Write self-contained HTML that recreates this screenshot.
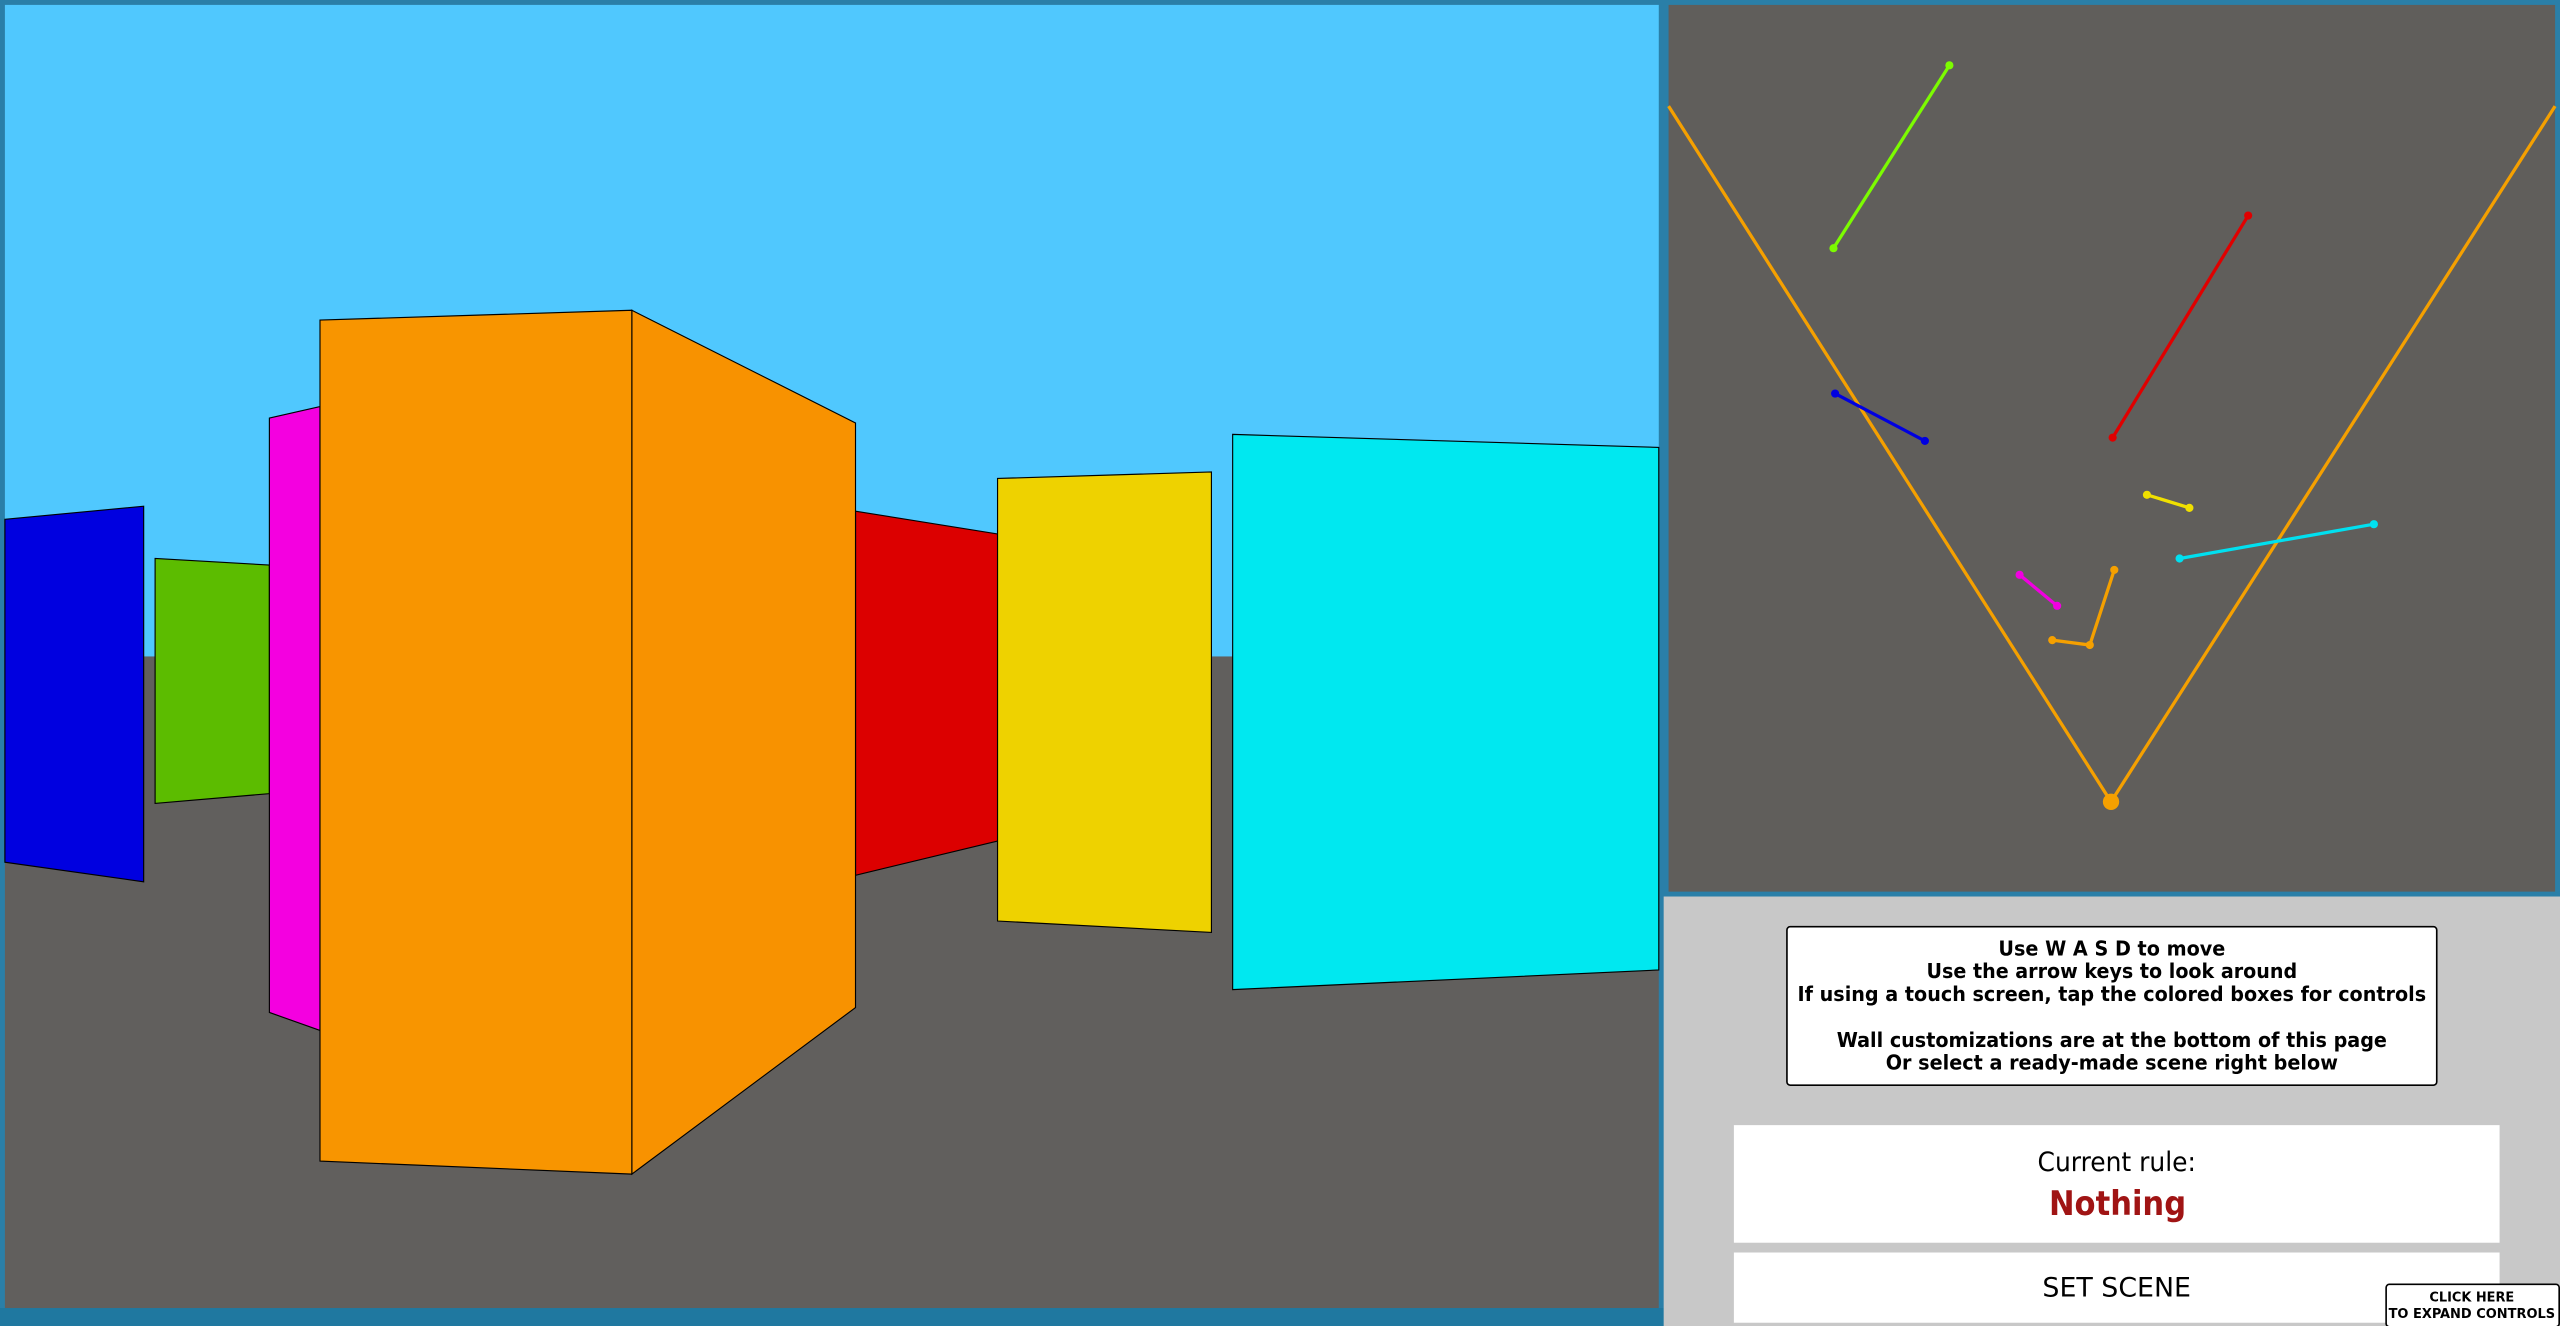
<!DOCTYPE html>
<html><head><meta charset="utf-8"><style>
html,body{margin:0;padding:0;width:2560px;height:1326px;overflow:hidden;background:#2a7fa8}
svg{display:block}
text{font-family:"DejaVu Sans Condensed","DejaVu Sans","Liberation Sans",sans-serif;text-anchor:middle}
</style></head><body>
<svg width="2560" height="1326" viewBox="0 0 1568 812" preserveAspectRatio="none">
<rect x="0" y="0" width="1568" height="812" fill="#2a7fa8"/>
<rect x="0" y="801" width="1019" height="11" fill="#1f78a0"/>
<rect x="3" y="3" width="1013" height="399" fill="#50c8fe"/>
<rect x="3" y="402" width="1013" height="399" fill="#615f5d"/>
<g stroke="#000" stroke-width="0.7">
<polygon points="3,318 88,310 88,540 3,528" fill="#0000e0"/>
<polygon points="95,342 165,346 165,486 95,492" fill="#5cbc00"/>
<polygon points="165,256 196,249 196,631 165,620" fill="#f400e0"/>
<polygon points="524,313 611,327 611,515 524,536" fill="#dc0000"/>
<polygon points="387,190 524,259 524,617 387,719" fill="#f89200"/>
<polygon points="196,196 387,190 387,719 196,711" fill="#f89500"/>
<polygon points="611,293 742,289 742,571 611,564" fill="#eed200"/>
<polygon points="755,266 1016,274 1016,594 755,606" fill="#00e8f0"/>
</g>
<rect x="1022" y="3" width="543" height="543" fill="#605e5b"/>
<rect x="1019" y="549" width="549" height="263" fill="#c8c8c8"/>
<g stroke-width="2" fill="none">
<polyline points="1022,65 1293,491 1565,65" stroke="#f5a000"/>
<line x1="1123" y1="152" x2="1194" y2="40" stroke="#7cfc00"/>
<line x1="1294" y1="268" x2="1377" y2="132" stroke="#e00000"/>
<line x1="1124" y1="241" x2="1179" y2="270" stroke="#0000e0"/>
<line x1="1315" y1="303" x2="1341" y2="311" stroke="#f0e000"/>
<line x1="1335" y1="342" x2="1454" y2="321" stroke="#00e0f0"/>
<line x1="1237" y1="352" x2="1260" y2="371" stroke="#f000e0"/>
<polyline points="1257,392 1280,395 1295,349" stroke="#f5a000"/>
</g>
<g>
<circle cx="1293" cy="491" r="5" fill="#f5a000"/>
<circle cx="1123" cy="152" r="2.5" fill="#7cfc00"/><circle cx="1194" cy="40" r="2.5" fill="#7cfc00"/>
<circle cx="1294" cy="268" r="2.5" fill="#e00000"/><circle cx="1377" cy="132" r="2.5" fill="#e00000"/>
<circle cx="1124" cy="241" r="2.5" fill="#0000e0"/><circle cx="1179" cy="270" r="2.5" fill="#0000e0"/>
<circle cx="1315" cy="303" r="2.5" fill="#f0e000"/><circle cx="1341" cy="311" r="2.5" fill="#f0e000"/>
<circle cx="1335" cy="342" r="2.5" fill="#00e0f0"/><circle cx="1454" cy="321" r="2.5" fill="#00e0f0"/>
<circle cx="1237" cy="352" r="2.5" fill="#f000e0"/><circle cx="1260" cy="371" r="2.5" fill="#f000e0"/>
<circle cx="1257" cy="392" r="2.5" fill="#f5a000"/><circle cx="1280" cy="395" r="2.5" fill="#f5a000"/><circle cx="1295" cy="349" r="2.5" fill="#f5a000"/>
</g>
<rect x="1094.5" y="567.5" width="398" height="97" rx="2" fill="#fff" stroke="#000" stroke-width="1"/>
<g font-size="12.5" font-weight="bold" fill="#000" lengthAdjust="spacingAndGlyphs">
<text x="1293.5" y="585" textLength="139" lengthAdjust="spacingAndGlyphs">Use W A S D to move</text>
<text x="1293.5" y="599" textLength="227" lengthAdjust="spacingAndGlyphs">Use the arrow keys to look around</text>
<text x="1293.5" y="613" textLength="385" lengthAdjust="spacingAndGlyphs">If using a touch screen, tap the colored boxes for controls</text>
<text x="1293.5" y="641" textLength="337" lengthAdjust="spacingAndGlyphs">Wall customizations are at the bottom of this page</text>
<text x="1293.5" y="655" textLength="277" lengthAdjust="spacingAndGlyphs">Or select a ready-made scene right below</text>
</g>
<rect x="1062" y="689" width="469" height="72" fill="#fff"/>
<text x="1296.5" y="717" font-size="16.5" fill="#000" textLength="97" lengthAdjust="spacingAndGlyphs">Current rule:</text>
<text x="1297" y="744" font-size="20.5" font-weight="bold" fill="#a01414" textLength="84" lengthAdjust="spacingAndGlyphs">Nothing</text>
<rect x="1062" y="767" width="469" height="43" fill="#fff"/>
<text x="1296.5" y="794" font-size="16.5" fill="#000" textLength="91" lengthAdjust="spacingAndGlyphs">SET SCENE</text>
<rect x="1461.5" y="786.5" width="106" height="26" rx="2" fill="#fff" stroke="#000" stroke-width="1"/>
<g font-size="8.3" font-weight="bold" fill="#000">
<text x="1514" y="797" textLength="52" lengthAdjust="spacingAndGlyphs">CLICK HERE</text>
<text x="1514" y="807" textLength="102" lengthAdjust="spacingAndGlyphs">TO EXPAND CONTROLS</text>
</g>
</svg>
</body></html>
